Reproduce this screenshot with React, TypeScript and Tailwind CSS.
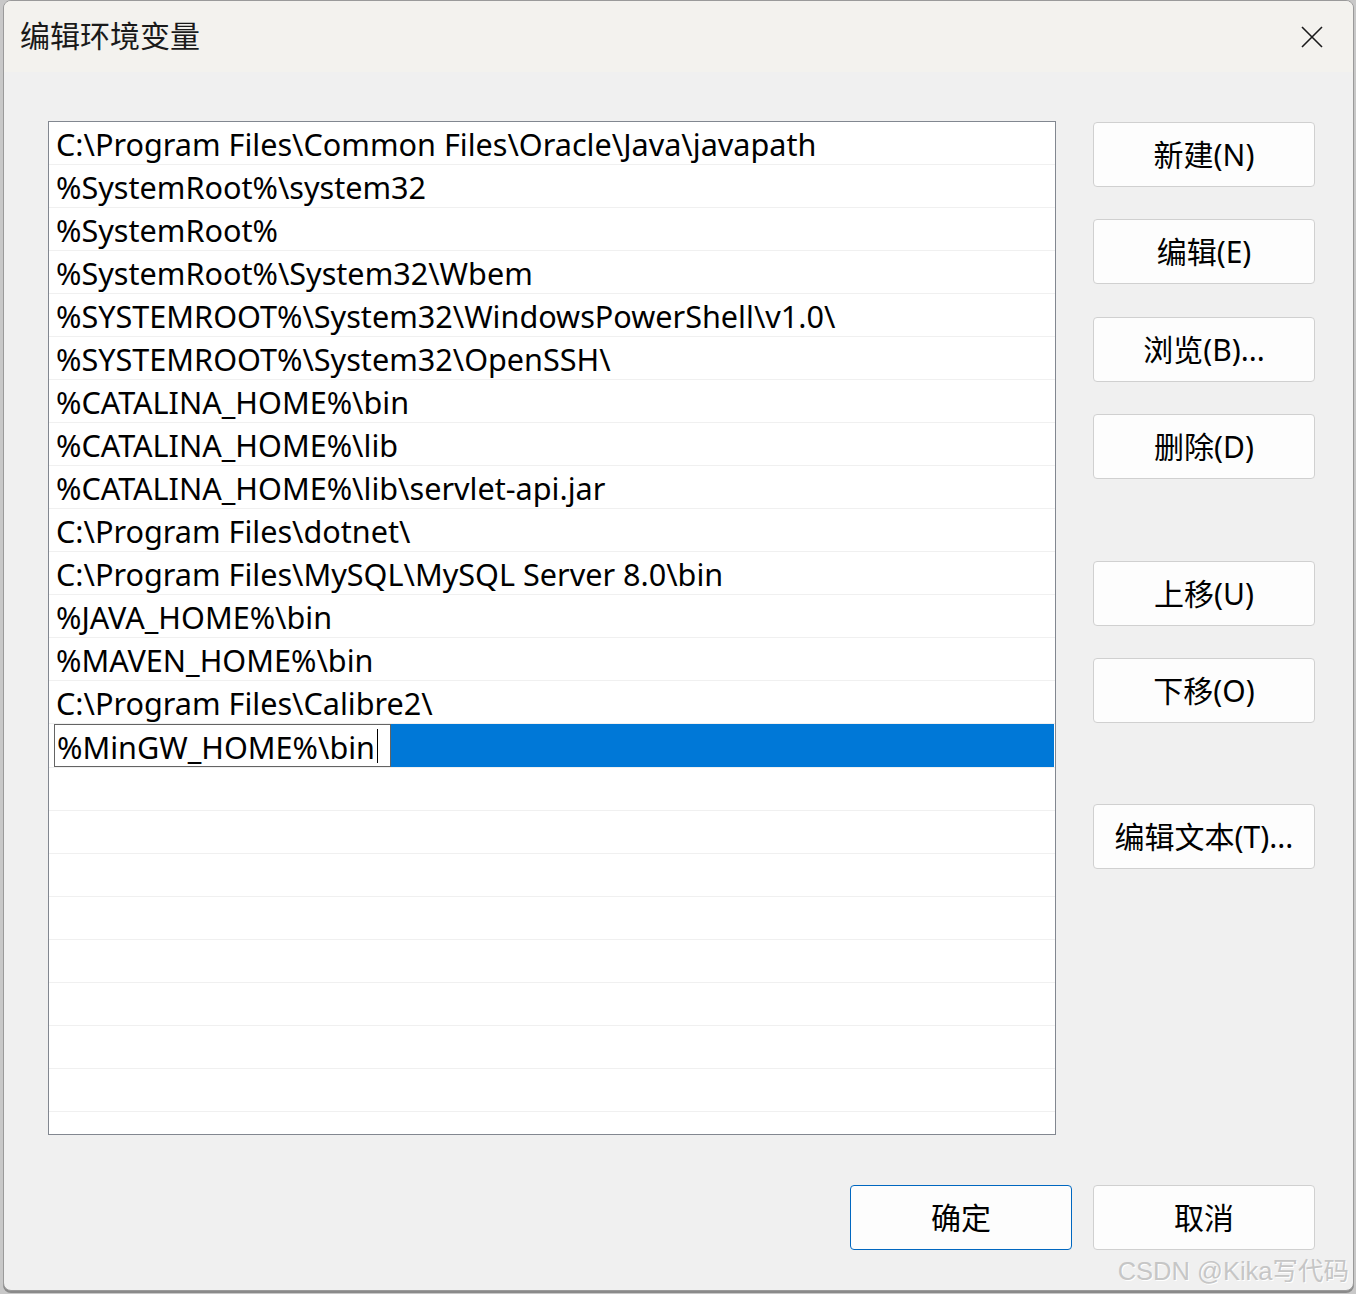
import React from 'react';

const paths = [
  'C:\\Program Files\\Common Files\\Oracle\\Java\\javapath',
  '%SystemRoot%\\system32',
  '%SystemRoot%',
  '%SystemRoot%\\System32\\Wbem',
  '%SYSTEMROOT%\\System32\\WindowsPowerShell\\v1.0\\',
  '%SYSTEMROOT%\\System32\\OpenSSH\\',
  '%CATALINA_HOME%\\bin',
  '%CATALINA_HOME%\\lib',
  '%CATALINA_HOME%\\lib\\servlet-api.jar',
  'C:\\Program Files\\dotnet\\',
  'C:\\Program Files\\MySQL\\MySQL Server 8.0\\bin',
  '%JAVA_HOME%\\bin',
  '%MAVEN_HOME%\\bin',
  'C:\\Program Files\\Calibre2\\',
];

const editing = '%MinGW_HOME%\\bin';
const emptyRows = 9;

const font = { fontFamily: '"Noto Sans", "Noto Sans CJK SC", sans-serif' };

function DlgButton({ label, primary }: { label: string; primary?: boolean }) {
  return (
    <button
      className={`w-[222px] h-[65px] rounded-[4px] bg-[#fdfdfd] text-[30px] text-black flex items-center justify-center border ${
        primary ? 'border-[#0067c0]' : 'border-[#d0d0d0]'
      }`}
    >
      {label}
    </button>
  );
}

export default function App() {
  return (
    <div className="w-[1356px] h-[1294px] bg-[#c8c8c8] pl-[3px] pr-[2px] pb-[3px]" style={font}>
      <div className="h-full flex flex-col rounded-[8px] overflow-hidden border border-[#9a9a9a] shadow-[0_2px_0_#8a8a8a] bg-[#f0f0f0] relative">
        {/* Title bar */}
        <div className="h-[71px] shrink-0 bg-[#f3f2ee] flex items-center justify-between pl-[16px] pr-[30px]">
          <span className="text-[30px] text-[#1a1a1a] leading-none pb-[2px]">编辑环境变量</span>
          <svg width="22" height="22" viewBox="0 0 22 22" className="mt-[1px]">
            <path d="M1 1L21 21M21 1L1 21" stroke="#1a1a1a" strokeWidth="1.6" />
          </svg>
        </div>

        {/* Body */}
        <div className="flex-1 flex flex-col pt-[49px] pl-[44px] pr-[38px]">
          <div className="flex gap-[37px]">
            {/* List */}
            <div className="w-[1008px] h-[1014px] bg-white border border-[#828790] overflow-hidden flex flex-col">
              {paths.map((p) => (
                <div
                  key={p}
                  className="h-[43px] shrink-0 border-b border-[#f0f0f0] flex items-center pl-[7px] text-[30.6px] text-black whitespace-nowrap leading-none"
                >
                  <span className="pt-[3px]">{p}</span>
                </div>
              ))}
              <div className="h-[43px] shrink-0 flex items-stretch pl-[5px] pr-px bg-white">
                <div className="flex items-center bg-white border border-[#646464] pl-[2px] pr-[12px] text-[30.6px] text-black leading-none whitespace-nowrap">
                  <span className="pt-[3px]">{editing}</span>
                  <span className="w-px h-[34px] bg-black ml-[2px]" />
                </div>
                <div className="flex-1 bg-[#0078d7]" />
              </div>
              {Array.from({ length: emptyRows }).map((_, i) => (
                <div key={i} className="h-[43px] shrink-0 border-t border-[#f0f0f0]" />
              ))}
            </div>

            {/* Side buttons */}
            <div className="flex flex-col pt-px">
              <DlgButton label="新建(N)" />
              <div className="h-[32px]" />
              <DlgButton label="编辑(E)" />
              <div className="h-[33px]" />
              <DlgButton label="浏览(B)..." />
              <div className="h-[32px]" />
              <DlgButton label="删除(D)" />
              <div className="h-[82px]" />
              <DlgButton label="上移(U)" />
              <div className="h-[32px]" />
              <DlgButton label="下移(O)" />
              <div className="h-[81px]" />
              <DlgButton label="编辑文本(T)..." />
            </div>
          </div>

          {/* Bottom buttons */}
          <div className="flex justify-end gap-[21px] pt-[50px]">
            <DlgButton label="确定" primary />
            <DlgButton label="取消" />
          </div>
        </div>

        {/* Watermark */}
        <span
          className="absolute right-[4px] bottom-[6px] text-[25.5px] leading-none text-[#c6c6c6] [text-shadow:1px_1px_0_#ffffff]"
          style={{ fontFamily: '"Liberation Sans", "Noto Sans CJK SC", sans-serif' }}
        >
          CSDN @Kika写代码
        </span>
      </div>
    </div>
  );
}
